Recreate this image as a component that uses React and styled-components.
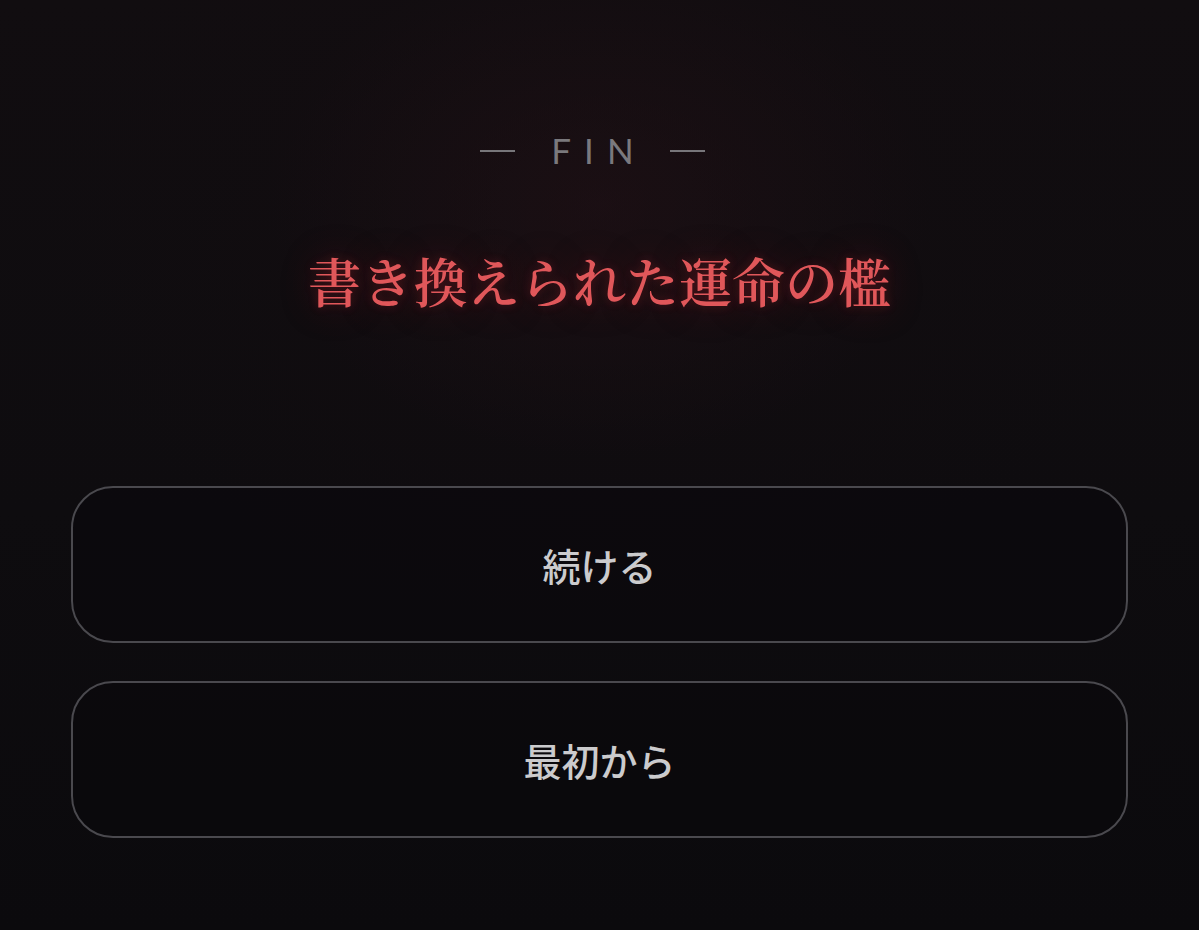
import React from "react";
import styled, { createGlobalStyle } from "styled-components";

const GlobalStyle = createGlobalStyle`
	html, body {
		margin: 0;
		padding: 0;
		background: #0d0b0e;
	}
	* {
		box-sizing: border-box;
	}
`;

const endingTitle = "書き換えられた運命の檻";

function App() {
	return (
		<>
			<GlobalStyle />
			<Screen>
				<Header>
					<FinLabel>
						<Rule />
						<FinText>FIN</FinText>
						<Rule />
					</FinLabel>
					<EndingTitle>{endingTitle}</EndingTitle>
				</Header>
				<Actions>
					<ActionButton type="button">続ける</ActionButton>
					<ActionButton type="button">最初から</ActionButton>
				</Actions>
			</Screen>
		</>
	);
}

export default App;

const Screen = styled.div`
	width: 100%;
	height: 930px;
	display: flex;
	flex-direction: column;
	padding: 0 71px;
	background:
		radial-gradient(
			ellipse 560px 420px at 50% 22%,
			rgba(40, 18, 24, 0.45) 0%,
			rgba(20, 12, 16, 0.2) 60%,
			rgba(13, 11, 14, 0) 100%
		),
		linear-gradient(180deg, #110d10 0%, #0e0c0f 55%, #0b0a0d 100%);
	overflow: hidden;
`;

const Header = styled.div`
	display: flex;
	flex-direction: column;
	align-items: center;
	padding-top: 128px;
	height: 486px;
`;

const FinLabel = styled.div`
	display: flex;
	align-items: center;
	gap: 36px;
	padding-right: 14px;
	color: #7a797d;
	font-family: Lato, "Open Sans", sans-serif;
	font-weight: 400;
	font-size: 35px;
	line-height: 44px;
`;

const Rule = styled.span`
	display: block;
	width: 35px;
	height: 2px;
	margin-top: 2px;
	background: #77767a;
`;

const FinText = styled.span`
	letter-spacing: 13px;
	margin-right: -13px;
`;

const EndingTitle = styled.h1`
	margin: 66px 0 0;
	padding: 10px 24px;
	color: #e0575a;
	font-family: "Noto Serif CJK JP", "IPAMincho", "Yu Mincho", "Noto Sans CJK JP", serif;
	font-size: 53px;
	font-weight: 600;
	line-height: 64px;
	text-shadow:
		0 0 10px rgba(190, 40, 50, 0.3),
		0 0 36px rgba(140, 20, 30, 0.4);
`;

const Actions = styled.div`
	display: flex;
	flex-direction: column;
	gap: 38px;
`;

const ActionButton = styled.button`
	height: 157px;
	width: 100%;
	border: 2px solid #4a494e;
	border-radius: 42px;
	background: rgba(10, 9, 12, 0.6);
	color: #cbcbcd;
	font-family: "Noto Sans CJK JP", "Noto Sans", sans-serif;
	font-size: 38px;
	font-weight: 500;
	cursor: pointer;
`;
